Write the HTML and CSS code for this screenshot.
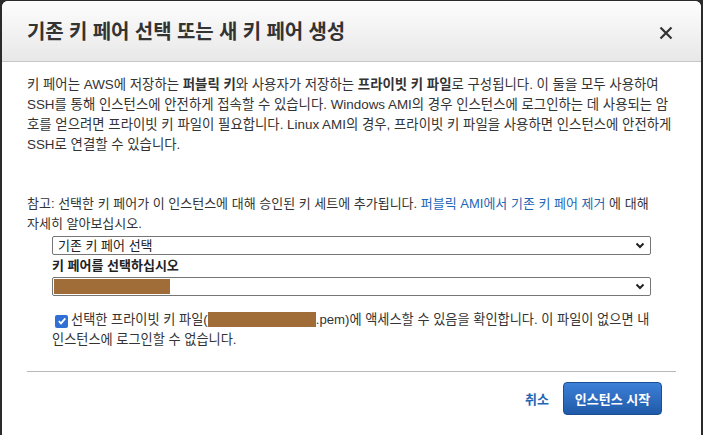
FILE: index.html
```html
<!DOCTYPE html>
<html lang="ko">
<head>
<meta charset="utf-8">
<link rel="stylesheet" href="styles.css">
</head>
<body>
<div class="dialog">
  <div class="header">
    <h1 class="title">기존 키 페어 선택 또는 새 키 페어 생성</h1>
    <svg class="close" width="14" height="14" viewBox="0 0 14 14"><path d="M1.5 1.5L12.5 12.5M12.5 1.5L1.5 12.5" stroke="#333" stroke-width="2.2" fill="none"/></svg>
  </div>
  <div class="content">
    <p class="para intro">키 페어는 AWS에 저장하는 <b>퍼블릭 키</b>와 사용자가 저장하는 <b>프라이빗 키 파일</b>로 구성됩니다. 이 둘을 모두 사용하여<br>SSH를 통해 인스턴스에 안전하게 접속할 수 있습니다. Windows AMI의 경우 인스턴스에 로그인하는 데 사용되는 암<br>호를 얻으려면 프라이빗 키 파일이 필요합니다. Linux AMI의 경우, 프라이빗 키 파일을 사용하면 인스턴스에 안전하게<br>SSH로 연결할 수 있습니다.</p>
    <p class="para note">참고: 선택한 키 페어가 이 인스턴스에 대해 승인된 키 세트에 추가됩니다. <a class="link">퍼블릭 AMI에서 기존 키 페어 제거</a> 에 대해<br>자세히 알아보십시오.</p>
    <div class="form">
      <div class="select"><span class="select-text">기존 키 페어 선택</span><svg class="chev" width="10" height="7" viewBox="0 0 10 7"><path d="M1.5 1.5L5 5L8.5 1.5" stroke="#222" stroke-width="2" fill="none"/></svg></div>
      <div class="label">키 페어를 선택하십시오</div>
      <div class="select"><span class="redact redact-sel"></span><svg class="chev" width="10" height="7" viewBox="0 0 10 7"><path d="M1.5 1.5L5 5L8.5 1.5" stroke="#222" stroke-width="2" fill="none"/></svg></div>
      <p class="ack"><span class="check"><svg width="10" height="10" viewBox="0 0 10 10"><path d="M1.8 5.2L4 7.4L8.3 2.4" stroke="#fff" stroke-width="1.8" fill="none"/></svg></span>선택한 프라이빗 키 파일(<span class="redact redact-file"></span>.pem)에 액세스할 수 있음을 확인합니다. 이 파일이 없으면 내<br>인스턴스에 로그인할 수 없습니다.</p>
    </div>
  </div>
  <div class="footer">
    <a class="cancel">취소</a>
    <button class="primary">인스턴스 시작</button>
  </div>
</div>
</body>
</html>
```
FILE: styles.css
```css
html, body {
  margin: 0;
  padding: 0;
  background: #2b2b2b;
  height: 100%;
  overflow: hidden;
}
body {
  font-family: "Liberation Sans", "Noto Sans CJK KR", sans-serif;
  color: #333;
}
.dialog {
  margin: 1px 2px 0 2px;
  background: #fff;
  border-radius: 6px 6px 0 0;
  height: 440px;
  overflow: hidden;
}
.header {
  height: 60px;
  background: linear-gradient(#fdfdfd, #e8e8e8);
  border-bottom: 1px solid #c6c6c6;
  display: flex;
  align-items: center;
  justify-content: space-between;
  padding: 0 28px 0 25px;
}
.title {
  margin: 0;
  font-size: 20px;
  font-weight: bold;
  color: #333;
  letter-spacing: -0.1px;
  padding-bottom: 1px;
}
.close {
  margin-top: 3px;
}
.content {
  padding: 13px 25px 0 25px;
}
.para {
  margin: 0;
  font-size: 13px;
  line-height: 20px;
  color: #333;
  white-space: nowrap;
}
.intro {
  font-size: 13.4px;
}
.para b {
  font-weight: bold;
}
.note {
  margin-top: 39px;
}
.link {
  color: #1f66b5;
}
.form {
  padding: 2px 0 0 25px;
}
.select {
  width: 597px;
  height: 17px;
  border: 1px solid #767676;
  border-radius: 2px;
  display: flex;
  align-items: center;
  justify-content: space-between;
  font-size: 13px;
  color: #222;
}
.select-text {
  padding-left: 5px;
  line-height: 17px;
}
.chev {
  margin-right: 5px;
}
.label {
  font-size: 13px;
  font-weight: bold;
  line-height: 22px;
  color: #222;
}
.redact {
  display: inline-block;
  background: #a06c38;
}
.redact-sel {
  width: 116px;
  height: 15px;
  margin-left: 1px;
}
.ack {
  margin: 14px 0 0 0;
  font-size: 13.2px;
  line-height: 20px;
  color: #333;
  white-space: nowrap;
}
.check {
  display: inline-flex;
  align-items: center;
  justify-content: center;
  width: 13px;
  height: 13px;
  background: #2f6fd6;
  border-radius: 2px;
  vertical-align: -2px;
  margin: 0 3px 0 3px;
}
.redact-file {
  width: 108px;
  height: 15px;
  vertical-align: -3px;
}
.footer {
  margin: 21px 25px 0 25px;
  border-top: 1px solid #b8b8b8;
  padding-top: 10px;
  display: flex;
  justify-content: flex-end;
  align-items: center;
  gap: 14px;
}
.cancel {
  color: #1f66b5;
  font-weight: bold;
  font-size: 13px;
}
.primary {
  width: 99px;
  height: 33px;
  margin-right: 14px;
  border: 1px solid #1b4f94;
  border-radius: 4px;
  background: linear-gradient(#3d80d8, #1f5aa8);
  color: #fff;
  font-family: "Liberation Sans", "Noto Sans CJK KR", sans-serif;
  font-size: 13px;
  font-weight: bold;
  padding: 0;
}
```
